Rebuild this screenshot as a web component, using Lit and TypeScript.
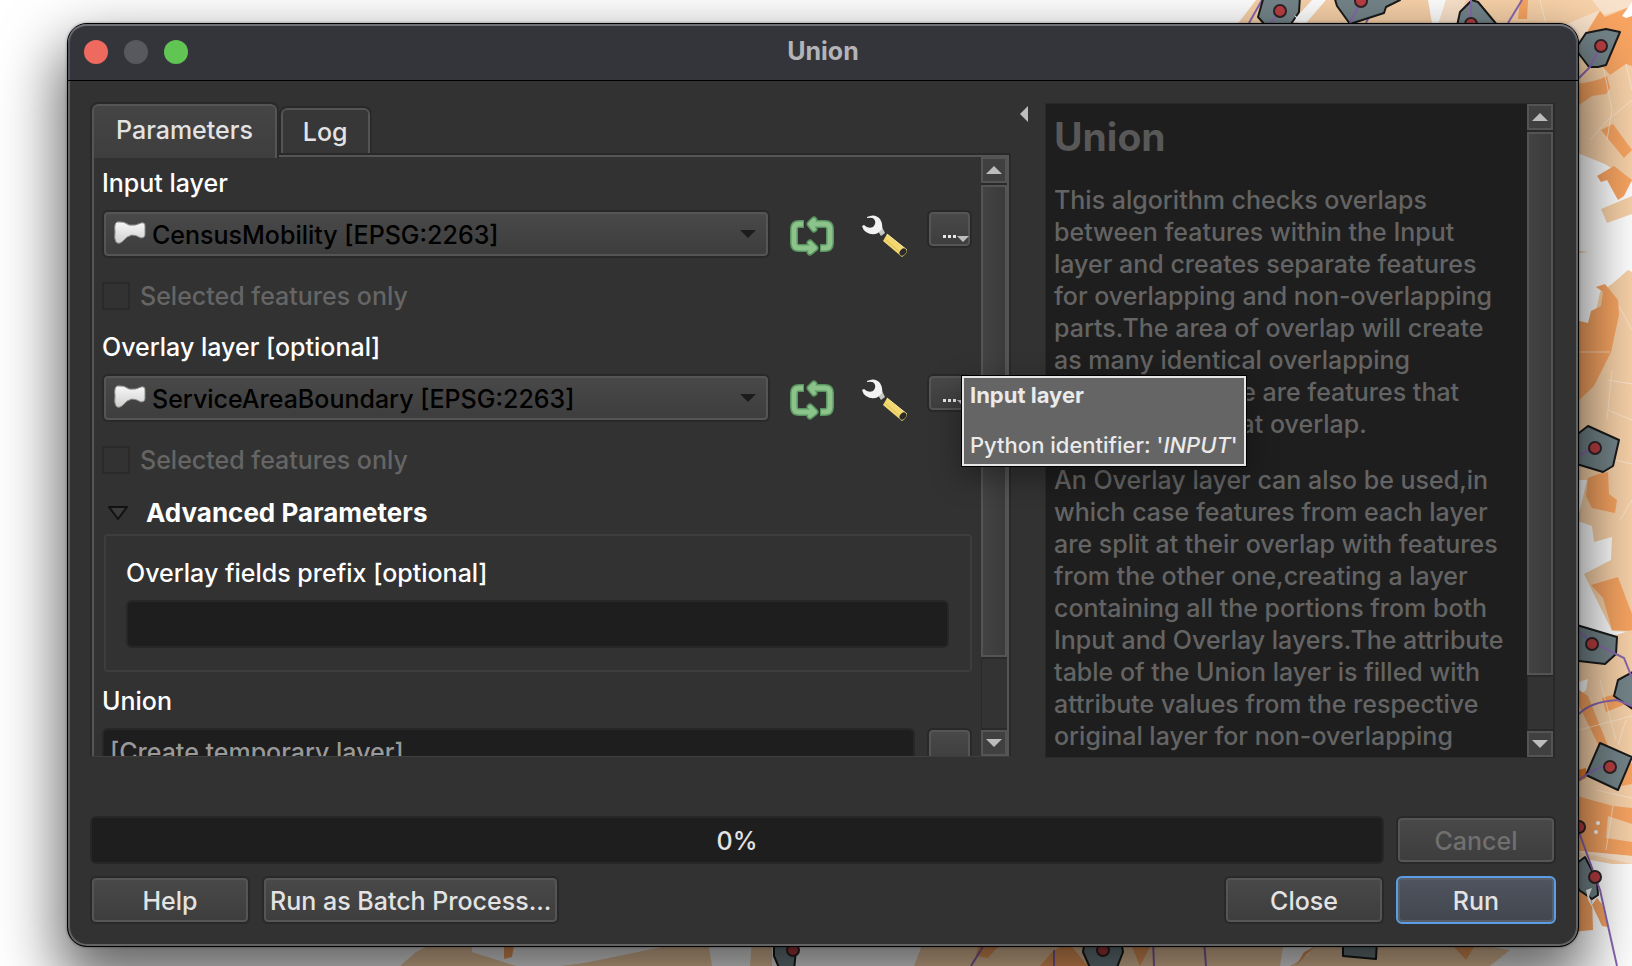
import { LitElement, html, css, svg } from "lit";
import { customElement, property } from "lit/decorators.js";

@customElement("map-canvas")
class MapCanvas extends LitElement {
  static styles = css`
    :host { display: block; }
    .map { display: block; width: 100%; height: 100%; }
    .pale { fill: #f8d2a9; }
    .paler { fill: #fae3cc; }
    .mid { fill: #f9a562; }
    .deep { fill: #ec7d28; }
    .bare { fill: #fff; }
    .zone { fill: #74858a; stroke: #1b1b1b; stroke-width: 2; stroke-linejoin: round; }
    .route { fill: none; stroke: #8a68b0; stroke-width: 2; }
    .parcel { fill: none; stroke: #fdeedd; stroke-width: 1; opacity: 0.7; }
    .stop { fill: #bb3f43; stroke: #2f2426; stroke-width: 2; }
  `;

  private stops = [
    [1280, 11], [1361, 1], [1471, 24], [1601, 46], [1595, 448], [1592, 644],
    [1610, 767], [1579, 827], [1595, 877], [793, 950], [1103, 950],
  ];

  render() {
    return html`
      <svg class="map" viewBox="0 0 1632 966" preserveAspectRatio="xMaxYMin slice" aria-hidden="true">
        <path class="pale" d="M1236 26 L1256 0 L1632 0 L1632 182 L1605 164 L1570 150 L1570 26Z" />
        <path class="bare" d="M1292 22 L1312 0 L1326 0 L1306 23Z M1428 0 L1446 0 L1440 23 L1432 23Z" />
        <path class="paler" d="M1446 0 L1466 0 L1456 24 L1438 24Z M1562 26 L1600 10 L1588 32 L1577 42Z M1592 0 L1632 0 L1632 6 L1604 15Z" />
        <path class="mid" d="M1520 0 L1528 0 L1527 19 L1518 19Z M1600 11 L1605 17 L1632 6 L1632 66 L1626 64 L1610 75 L1604 68 L1588 50 L1588 30Z" />
        <path class="mid" d="M1575 84 Q1596 82 1607 76 L1610 88 L1606 94 L1592 96 L1575 108Z M1601 130 L1613 124 L1632 150 L1624 158Z" />
        <path class="bare" d="M1622 16 L1632 2 L1632 16 L1626 18Z" />
        <path class="mid" d="M1597 176 L1614 166 L1632 180 L1624 196 L1618 200 L1607 180 L1601 182Z" />
        <path class="pale" d="M1601 209 L1632 196 L1632 214 L1607 223Z M1579 251 L1589 252 L1579 253Z" />
        <path class="parcel" d="M1604 70 L1612 110 L1607 140 M1632 100 L1608 120 L1590 140 M1626 64 L1632 90 M1470 0 L1474 24 M1540 0 L1546 24" />

        <path class="pale" d="M1575 410 L1600 292 L1612 284 L1628 270 L1632 272 L1632 632 L1612 631 L1584 574 L1611 560 L1612 537 L1594 542 L1592 526 L1575 520Z" />
        <path class="bare" d="M1570 480 L1587 480 L1579 514 L1570 516Z" />
        <path class="mid" d="M1575 320 L1588 323 L1591 311 L1601 306 L1603 292 L1596 287 L1605 284 L1618 300 L1619 315 L1611 352 L1594 386 L1575 404Z" />
        <path class="mid" d="M1588 478 L1598 474 L1608 472 L1609 494 L1617 500 L1615 513 L1592 508 L1586 496Z" />
        <path class="mid" d="M1591 585 L1618 577 L1632 614 L1632 631 L1612 630 L1603 598Z" />
        <path class="parcel" d="M1579 352 L1610 352 M1619 306 L1632 330 M1608 380 L1632 384 M1612 370 L1607 420 M1616 460 L1632 464 M1620 520 L1632 500 M1608 410 L1632 420" />

        <path class="pale" d="M1570 640 L1600 640 L1632 630 L1632 864 L1612 864 L1570 856Z" />
        <path class="bare" d="M1579 682 L1588 679 L1586 690 L1579 696Z" />
        <path class="mid" d="M1579 690 L1588 696 L1608 746 L1600 748 L1579 706Z M1602 698 L1622 692 L1626 704 L1606 712Z M1618 760 L1626 755 L1632 764 L1632 784 L1622 786Z" />
        <path class="deep" d="M1570 772 L1586 768 L1586 778 L1570 786Z" />
        <path class="mid" d="M1570 794 L1613 806 L1632 808 L1632 824 L1608 816 L1606 838 L1632 842 L1632 856 L1570 850Z" />
        <circle class="bare" cx="1598" cy="823" r="2" /><circle class="bare" cx="1596" cy="832" r="2" />
        <path class="parcel" d="M1579 730 L1632 716 M1600 680 L1616 740 M1596 790 L1632 798 M1613 806 L1606 850 M1626 720 L1618 745" />
        <path class="paler" d="M1570 850 L1632 856 L1632 864Z" />
        <path class="mid" d="M1570 884 L1592 898 L1593 930 L1570 932Z M1597 898 L1602 904 L1608 927 L1602 926 L1592 905Z" />

        <path class="pale" d="M400 966 L416 952 L440 940 L1450 940 L1510 950 L1490 966Z" />
        <path class="bare" d="M472 952 L472 940 L505 940 L690 940 L676 952 L560 966 L516 966Z M708 940 L752 940 L750 966 L712 966Z M772 940 L924 940 L914 966 L772 966Z M1284 940 L1316 940 L1308 955 L1290 966 L1280 966Z" />
        <path class="pale" d="M686 942 L706 942 L704 966 L570 966Z" />
        <path class="mid" d="M504 940 L515 940 L512 957 L504 959Z M978 947 L998 947 L988 958 L976 956Z M1060 947 L1072 947 L1088 966 L1040 966 L1052 952Z M1132 947 L1150 947 L1140 966Z M1296 966 L1304 952 L1314 947Z M1454 947 L1466 960 L1474 947Z" />

        <path class="route" d="M1249 23 L1262 0 M1275 23 L1288 5 L1300 0 M1350 23 L1361 0 M1366 23 L1377 0 M1471 20 V0 M1508 23 L1522 0" />
        <path class="route" d="M971 966 L987 940 M1054 966 V950 M1153 940 L1154 966 M1204 940 L1206 966" />
        <path class="zone" d="M1264 -4 L1258 17 L1266 26 L1291 24 L1299 12 L1300 -4Z M1334 -4 L1337 6 L1350 24 L1384 13 L1386 7 L1400 0 L1402 -4Z M1457 26 L1460 12 L1472 0 L1478 2 L1498 26Z" />
        <path class="zone" d="M1576 48 L1586 33 L1606 29 L1620 32 L1606 65 L1598 67 L1589 67 L1576 50Z" />
        <path class="zone" d="M1570 440 L1588 426 L1619 440 L1613 466 L1603 472 L1570 462Z M1570 623 L1617 637 L1616 654 L1605 664 L1570 660Z M1640 668 L1618 680 L1614 696 L1640 714Z" />
        <path class="zone" d="M1600 743 L1632 757 L1618 790 L1586 775Z M1570 868 L1585 857 L1597 880 L1598 895 L1592 899 L1579 890Z" />
        <path class="zone" d="M774 940 L774 956 L780 970 L794 970 L797 940Z M1085 940 L1083 952 L1091 970 L1116 970 L1123 952 L1121 940Z M1343 940 L1343 956 L1376 959 L1377 940Z" />
        <path class="route" d="M1280 11 L1270 24 M1361 1 L1350 23 M1471 24 V0 M1601 46 L1590 67 L1579 78 M1595 448 L1579 455" />
        <path class="route" d="M1579 632 L1592 642 L1624 658 L1632 678 M1579 714 Q1590 702 1617 700 L1632 706 M1610 767 Q1600 764 1579 780" />
        <path class="route" d="M1579 832 L1600 890 L1617 966" />
        <path class="bare" d="M796 966 L798 954 L802 958 L798 966Z M1294 15 L1302 20 L1300 24Z M1586 890 L1592 888 L1589 896 L1594 910 L1588 900Z" />
        ${this.stops.map(([x, y]) => svg`<circle class="stop" cx=${x} cy=${y} r="6" />`)}
      </svg>
    `;
  }
}

@customElement("scroll-rail")
class ScrollRail extends LitElement {
  static styles = css`
    :host { display: flex; flex-direction: column; width: 26px; box-sizing: border-box; background: #333; box-shadow: inset 1px 0 #2a2a2a; }
    .step { flex: none; box-sizing: border-box; height: 26px; margin: 0; padding: 0; border: 2px solid #545454; background: #404040; display: grid; place-items: center; }
    .track { flex: 1; min-height: 0; display: flex; flex-direction: column; border: solid #2a2a2a; border-width: 2px 0; }
    .thumb { box-sizing: border-box; border: 2px solid #545454; background: linear-gradient(90deg, #434343, #3b3b3b); box-shadow: 0 2px #2a2a2a; }
    .glyph { display: block; fill: #bdbdbd; }
  `;

  @property({ type: Number }) extent = 80;

  render() {
    return html`
      <button class="step" aria-label="Scroll up"><svg class="glyph" width="16" height="8"><path d="M0 8 L8 0 L16 8Z" /></svg></button>
      <div class="track"><div class="thumb" style="height:${this.extent}%"></div></div>
      <button class="step" aria-label="Scroll down"><svg class="glyph" width="16" height="8"><path d="M0 0 H16 L8 8Z" /></svg></button>
    `;
  }
}

@customElement("app-root")
class AppRoot extends LitElement {
  static styles = css`
    :host {
      display: block; position: relative; height: 100vh; overflow: hidden; box-sizing: border-box;
      padding: 23px 53px 19px 67px; background: #fff;
      font-family: Inter, "Liberation Sans", sans-serif; font-size: 25px; font-weight: 500; line-height: 32px; color: #e3e3e3;
    }
    button, input, select { font: inherit; color: inherit; margin: 0; box-sizing: border-box; }
    .backdrop { position: absolute; inset: 0; }
    .dialog {
      position: relative; box-sizing: border-box; height: 100%; display: flex; flex-direction: column;
      background: #323232; border: 1px solid #000; border-radius: 20px;
      box-shadow: inset 0 0 0 2px #636363, 0 0 3px rgba(0,0,0,.4), 0 30px 60px 8px rgba(0,0,0,.6);
    }
    .titlebar {
      flex: none; height: 56px; display: grid; grid-template-columns: 1fr auto 1fr; align-items: center;
      border-bottom: 1px solid #000; border-radius: 19px 19px 0 0; padding: 0 16px;
      background: #34353b; box-shadow: inset 0 2px #707177, inset 2px 0 #54555b, inset -2px 0 #54555b; color: #b4b4b7;
    }
    .title { margin: 0; padding-bottom: 2px; font-size: 25px; font-weight: 700; }
    .lights { display: flex; gap: 16px; }
    .light { width: 24px; height: 24px; padding: 0; border: 0; border-radius: 50%; }
    .shut { background: #ee6a5f; }
    .idle { background: #58595e; }
    .grow { background: #61c554; }
    .body { flex: 1; min-height: 0; display: flex; flex-direction: column; padding: 22px; }
    .main { flex: 1; min-height: 0; display: grid; grid-template-columns: 921fr 34px 511fr; }
    .left { min-height: 0; min-width: 0; display: flex; flex-direction: column; }
    .tabs { flex: none; display: flex; align-items: flex-end; height: 50px; }
    .tab { padding: 0 20px; border: 2px solid #555; border-bottom: 0; border-radius: 6px 6px 0 0; outline: 2px solid #292929; height: 45px; margin-left: 4px; background: #373737; clip-path: inset(-2px -2px 0 -2px); }
    .tab.current { position: relative; height: 54px; margin: 0 0 -5px 2px; padding: 0 22px 4px; background: linear-gradient(#454545, #3e3e3e); }
    .pane { flex: 1; min-height: 0; display: flex; border: 2px solid #292929; border-bottom: 1px solid #3e3e3e; box-shadow: inset 2px 2px #555, inset -2px 0 #555; padding: 2px 2px 0 2px; margin-bottom: 1px; }
    .form { flex: 1; min-width: 0; min-height: 0; overflow: hidden; padding: 10px 9px 0 8px; display: flex; flex-direction: column; }
    .form > * { flex: none; }
    .label { color: #fff; margin-bottom: 11px; display: block; }
    .row { display: flex; align-items: flex-start; }
    .combo { position: relative; flex: 1; min-width: 0; }
    .face { border: 2px solid #292929; border-radius: 6px; background: linear-gradient(#494949, #3d3d3d); box-shadow: inset 0 0 0 2px #555; }
    .picker { display: block; width: 100%; height: 48px; appearance: none; padding: 2px 40px 0 48px; color: #000; }
    .flag { position: absolute; left: 12px; top: 11px; pointer-events: none; }
    .caret { position: absolute; right: 14px; top: 20px; fill: #1c1c1c; pointer-events: none; }
    .tool { flex: none; padding: 2px 0 0; border: 0; background: none; width: 46px; height: 50px; margin-bottom: -2px; display: grid; place-items: center; }
    .cycle { margin-left: 19px; }
    .wrench { margin-left: 26px; margin-right: 20px; }
    .more { flex: none; width: 45px; height: 38px; padding: 0; display: grid; place-items: center; }
    .check { display: flex; align-items: center; gap: 10px; color: #656565; margin: 22px 0 19px; }
    .box { appearance: none; width: 28px; height: 28px; border: 2px solid #2a2a2a; border-radius: 2px; background: #323232; }
    .fold { display: flex; align-items: center; gap: 17px; padding: 0 0 0 5px; margin: 2px 0 5px; border: 0; background: none; color: #fff; font-size: 26px; font-weight: 700; text-align: left; }
    .group { border: 2px solid #3d3d3d; border-radius: 4px; padding: 21px 21px 22px 20px; margin: 0 0 13px 2px; }
    .entry { display: block; width: 100%; min-width: 0; height: 48px; border: 2px solid #272727; border-radius: 6px; background: #1e1e1e; padding: 0 6px; color: #8b8b8b; }
    .output { flex: 1; margin-right: 12px; }
    .entry::placeholder { color: #999; opacity: 1; }
    .gutter { position: relative; }
    .collapse { display: block; padding: 0; border: 0; background: none; margin: 2px 0 0 9px; height: 17px; width: 8px; }
    .light-glyph { display: block; fill: #bdbdbd; }
    .tip {
      position: absolute; z-index: 2; left: -50px; top: 272px; white-space: nowrap; box-sizing: border-box; width: 286px; height: 92px;
      border: 1px solid #000; box-shadow: inset 0 0 0 2px #e6e6e6, 0 10px 30px rgba(0,0,0,.35); background: #656565;
      padding: 7px 8px; font-size: 22px; line-height: 25px; color: #eaeaea;
    }
    .tip p { margin: 0 0 25px; }
    .help { min-width: 0; min-height: 0; display: flex; margin-right: 1px; background: #1e1e1e; border: 1px solid #292929; border-right-width: 2px; }
    .prose { flex: 1; min-width: 0; overflow: hidden; padding: 0 8px; color: #646464; white-space: nowrap; }
    .prose h2 { margin: 10px 0 24px; font-size: 39px; line-height: 46px; font-weight: 700; color: #585858; }
    .prose p { margin: 0 0 24px; }
    .foot { flex: none; display: grid; grid-template-columns: 160px 1fr 160px 160px; gap: 12px; margin-top: 58px; }
    .bar { grid-column: 1 / 4; display: grid; place-items: center; padding-top: 2px; border: 2px solid #272727; border-radius: 6px; background: #1e1e1e; }
    .push { height: 48px; padding: 2px 6px 0; white-space: nowrap; }
    .batch { justify-self: start; }
    .push:disabled { color: #707070; }
    .primary { border-color: #5b9ee6; background: linear-gradient(#50545e, #42464f); box-shadow: inset 0 0 0 2px #5b5f69; }
  `;

  private overview = [
    "This algorithm checks overlaps", "between features within the Input", "layer and creates separate features",
    "for overlapping and non-overlapping", "parts.The area of overlap will create", "as many identical overlapping",
    "features as there are features that", "participate in that overlap.",
  ];

  private details = [
    "An Overlay layer can also be used,in", "which case features from each layer", "are split at their overlap with features",
    "from the other one,creating a layer", "containing all the portions from both", "Input and Overlay layers.The attribute",
    "table of the Union layer is filled with", "attribute values from the respective", "original layer for non-overlapping",
    "features and attribute values from",
  ];

  private lines(text: string[]) {
    return text.map((line) => html`${line}<br />`);
  }

  private layerRow(id: string, caption: string, value: string) {
    return html`
      <label class="label" for=${id}>${caption}</label>
      <div class="row">
        <div class="combo">
          <select class="picker face" id=${id}><option>${value}</option></select>
          <svg class="flag" width="32" height="24" viewBox="0 0 32 24" aria-hidden="true">
            <defs><linearGradient id="sheen" x1="0" y1="0" x2="0" y2="1"><stop offset="0" stop-color="#f8f8f8" /><stop offset="1" stop-color="#cfcfcf" /></linearGradient></defs>
            <path d="M3 1 Q10 0 15 4 Q22 5 27 2 Q31 1 31 5 V14 Q31 17 27 17 Q22 14 18 14 Q13 15 9 20 Q5 24 2 21 Q0 18 1 11 Q0 2 3 1Z" fill="url(#sheen)" stroke="#8b8b86" stroke-width="1" />
          </svg>
          <svg class="caret" width="16" height="8" aria-hidden="true"><path d="M0 0 H16 L8 8Z" /></svg>
        </div>
        <button class="tool cycle" aria-label="Iterate over this layer">
          <svg width="44" height="40" viewBox="0 0 44 40" fill="none" stroke-linecap="butt" stroke-linejoin="round">
            <g stroke="#5a9460" stroke-width="8"><path d="M14 8 H9 Q4 8 4 13 V27 Q4 32 9 32 H24" /><path d="M30 32 H35 Q40 32 40 27 V13 Q40 8 35 8 H20" /><path stroke-linecap="round" stroke-width="7" d="M24 4 L20 8 L24 13 M20 27 L25 32 L20 36" /></g>
            <g stroke="#8bc38b" stroke-width="5"><path d="M13 8 H9 Q4 8 4 13 V27 Q4 32 9 32 H25" /><path d="M31 32 H35 Q40 32 40 27 V13 Q40 8 35 8 H20" /><path stroke-linecap="round" stroke-width="4" d="M24 4 L20 8 L24 13 M20 27 L25 32 L20 36" /></g>
          </svg>
        </button>
        <button class="tool wrench" aria-label="Advanced options">
          <svg width="46" height="46" viewBox="0 0 46 46">
            <path d="M17 18 L21 14 L24 20 L20 23Z" fill="#c5c9c2" />
            <path d="M6 4 Q14 0 19 6 Q22 11 21 16 L17 20 Q11 23 5 19 Q2 17 1 13 L3 12 Q7 16 12 14 Q16 10 13 6 Q11 4 6 5Z" fill="#f2f3f2" />
            <path d="M26 21 L46 37 Q46 41 41 44 L22 28Z" fill="#f2d86f" />
            <path d="M24 26 L42 42" stroke="#dcc05c" stroke-width="1" />
            <path d="M26 21 L46 37" stroke="#fff0a8" stroke-width="1" />
            <ellipse cx="42" cy="39" rx="3" ry="4" transform="rotate(38 42 39)" fill="#2b2b2b" />
          </svg>
        </button>
        <button class="more face" aria-label="More choices">
          <svg width="40" height="33" viewBox="0 0 40 33"><g fill="#e6e6e6"><rect x="13" y="22" width="3" height="3" /><rect x="18" y="22" width="3" height="3" /><rect x="23" y="22" width="3" height="3" /></g><path d="M27 23 H39 L33 29Z" fill="#bdbdbd" /></svg>
        </button>
      </div>
      <label class="check"><input class="box" type="checkbox" disabled />Selected features only</label>
    `;
  }

  render() {
    return html`
      <map-canvas class="backdrop"></map-canvas>
      <section class="dialog" role="dialog" aria-labelledby="title">
        <header class="titlebar">
          <div class="lights">
            <button class="light shut" aria-label="Close window"></button>
            <button class="light idle" aria-label="Minimize window"></button>
            <button class="light grow" aria-label="Zoom window"></button>
          </div>
          <h1 class="title" id="title">Union</h1>
        </header>
        <div class="body">
          <div class="main">
            <div class="left">
              <div class="tabs" role="tablist">
                <button class="tab current" role="tab" aria-selected="true">Parameters</button>
                <button class="tab" role="tab" aria-selected="false">Log</button>
              </div>
              <div class="pane" role="tabpanel">
                <div class="form">
                  ${this.layerRow("input-layer", "Input layer", "CensusMobility [EPSG:2263]")}
                  ${this.layerRow("overlay-layer", "Overlay layer [optional]", "ServiceAreaBoundary [EPSG:2263]")}
                  <button class="fold" aria-expanded="true">
                    <svg width="22" height="16" viewBox="0 0 22 16" aria-hidden="true"><path d="M2 2 H20 L11 14Z" fill="#3b3b3b" stroke="#121212" stroke-width="2" stroke-linejoin="round" /></svg>
                    Advanced Parameters
                  </button>
                  <div class="group">
                    <label class="label" for="prefix">Overlay fields prefix [optional]</label>
                    <input class="entry" id="prefix" type="text" />
                  </div>
                  <label class="label" for="output">Union</label>
                  <div class="row">
                    <input class="entry output" id="output" type="text" placeholder="[Create temporary layer]" />
                    <button class="more face" aria-label="Choose output"></button>
                  </div>
                </div>
                <scroll-rail .extent=${87}></scroll-rail>
              </div>
            </div>
            <div class="gutter">
              <button class="collapse" aria-label="Collapse help">
                <svg class="light-glyph" width="8" height="16"><path d="M8 0 V16 L0 8Z" /></svg>
              </button>
              <div class="tip" role="tooltip"><p><b>Input layer</b></p><p>Python identifier: '<i>INPUT</i>'</p></div>
            </div>
            <aside class="help">
              <div class="prose">
                <h2>Union</h2>
                <p>${this.lines(this.overview)}</p>
                <p>${this.lines(this.details)}</p>
              </div>
              <scroll-rail .extent=${91}></scroll-rail>
            </aside>
          </div>
          <footer class="foot">
            <div class="bar" role="progressbar" aria-valuenow="0" aria-label="Progress">0%</div>
            <button class="push face" disabled>Cancel</button>
            <button class="push face">Help</button>
            <button class="push face batch">Run as Batch Process...</button>
            <button class="push face">Close</button>
            <button class="push face primary">Run</button>
          </footer>
        </div>
      </section>
    `;
  }
}
